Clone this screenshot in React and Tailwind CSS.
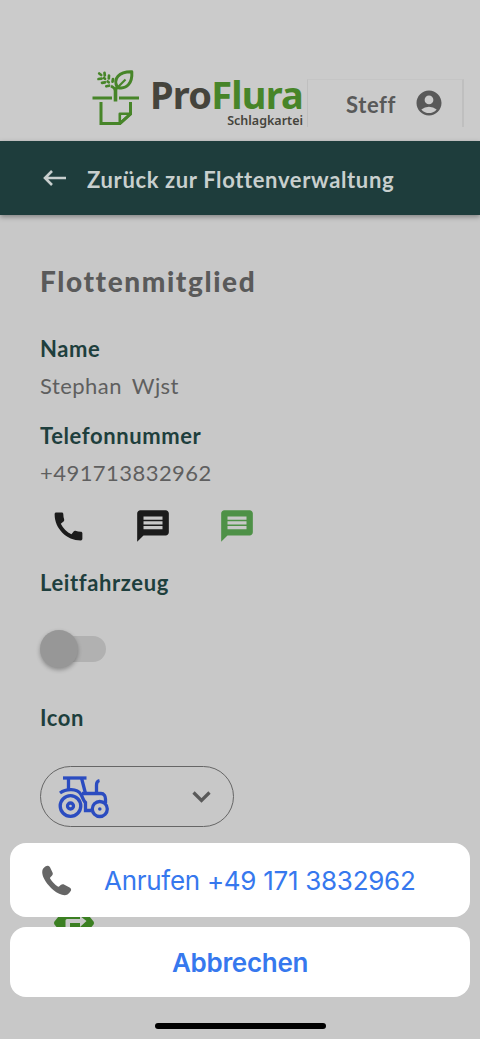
import { useState } from "react";
import clsx from "clsx";
import { MdAccountCircle, MdCall, MdMessage } from "react-icons/md";

function LogoMark() {
  return (
    <svg className="w-[48px] h-[56px] shrink-0" viewBox="0 0 48 56" fill="none" stroke="#478529">
      <path d="M0.5 28H20M27 28h20" strokeWidth="2.8" />
      <path d="M23.500 31.500V19" strokeWidth="3.6" />
      <path d="M23.500 21c0-2-1.500-3.500-4.500-5M23.500 20c.5-1.500 1-2.500 2.500-3.500" strokeWidth="2.8" />
      <path d="M25.500 17.500C20.500 9 27 1.500 39.800 1.800C40.500 12 35.500 20 25.500 17.500Z" strokeWidth="3" strokeLinejoin="round" />
      <path d="M25.500 17.500L33.500 9.500" strokeWidth="2.2" />
      <path
        d="M7.200 3.500l2 1.500M12.500 2.800l.3 2.700M17 5.500l-.2 3M21 9l-.5 2.700M6.500 9l3-.3M10 12.800l3-.5M14.300 16.300l2.800-.6M12 8l1 .8M15.700 11.500l1 .8"
        strokeWidth="2.7"
        strokeLinecap="round"
      />
      <path d="M9 32v21.500h19L38.500 44V32" strokeWidth="3" />
      <path d="M27.800 53.500v-9.700h10.700L27.800 53.500Z" strokeWidth="2.6" strokeLinejoin="round" />
    </svg>
  );
}

function TractorIcon() {
  return (
    <svg className="w-[52px] h-[44px]" viewBox="0 0 52 44" fill="none" stroke="#2b4cc0" strokeWidth="3.3">
      <path d="M5 3h23.500" />
      <path d="M10.500 3v13M23.500 3l4 15.500" />
      <path d="M2 18c6-4.500 17-5 21 1.500 2 3 2.500 7.500 5.500 8.800" />
      <path d="M24 18.500h19c3 0 4.500 2.500 4.500 5.500v4" />
      <path d="M38.500 18.500V10c0-2.500.5-4 3-4.500" />
      <path d="M27.500 27v8.500h6" />
      <circle cx="12.500" cy="31" r="10.3" />
      <circle cx="12.500" cy="31" r="3" />
      <circle cx="41.800" cy="34" r="7.500" />
      <circle cx="41.800" cy="34" r="1.800" fill="#2b4cc0" stroke="none" />
    </svg>
  );
}

function HandsetIcon() {
  return (
    <svg className="w-[30px] h-[31px]" viewBox="0 0 30 31" fill="#666">
      <path d="M1.200 3.500C2.500 1.600 4.500.5 6 .7c.9.1 1.500.6 2 1.500l2.400 5c.7 1.400.5 2.600-.5 3.600l-1.500 1.400c-.5.5-.5 1-.1 1.600 1.800 3 4.600 5.900 7.500 7.700.6.400 1.100.3 1.600-.2l1.300-1.200c1.100-1 2.400-1.100 3.700-.4l5.200 2.800c1.500.9 1.900 2.200 1.100 3.600-.9 1.600-2 2.700-3.200 3.400-3.300 1.900-8.900-.1-14.200-4.500C5.200 19.600.8 13.200.3 8.200.1 6.300.3 4.800 1.200 3.500Z" />
    </svg>
  );
}

function DirectionSign() {
  return (
    <svg className="w-[42px] h-[26px]" viewBox="0 0 42 26">
      <path d="M10 1h22l8.500 10.500q1.200 1.500 0 3L32 25H10L1.500 14.500q-1.200-1.500 0-3Z" fill="#3b7f22" />
      <path d="M12.500 22V10.500q0-1.500 1.500-1.500H27V6l6.500 5L27 17v-4H17v9Z" fill="#c8c8c8" />
    </svg>
  );
}

function Label({ children }) {
  return <h3 className="h-8 text-[22px] leading-8 font-bold tracking-[0.6px] text-[#1e3f3d]">{children}</h3>;
}

function App() {
  const [leader, setLeader] = useState(false);
  const [sheetOpen, setSheetOpen] = useState(true);

  return (
    <div className="relative flex flex-col w-full h-[1039px] overflow-hidden bg-[#c8c8c8] font-['Lato',sans-serif]">
      <header className="flex h-[141px] shrink-0 items-start bg-[#cbcbcb] pl-[92px] pt-[70px]">
        <LogoMark />
        <div className="ml-[10px] w-[153px] font-['Noto_Sans',sans-serif] font-bold whitespace-nowrap">
          <div className="mt-[5px] text-[38px] leading-[38px] tracking-[-0.8px] text-[#45443c]">
            Pro<span className="text-[#478529]">Flura</span>
          </div>
          <div className="text-right text-[12.5px] leading-[15px] font-semibold text-[#45443c]">Schlagkartei</div>
        </div>
        <button className="mt-[9px] ml-[4px] flex h-[48px] w-[157px] items-center border-t border-r-2 border-l border-t-[#c5c5c5] border-r-[#bfbfbf] border-l-[#bfbfbf] pt-px pl-[38px] text-[22px] font-bold tracking-[0.6px] text-[#595959]">
          Steff
          <MdAccountCircle className="mb-[2px] ml-[18px] size-[30px]" />
        </button>
      </header>

      <nav className="flex h-[74px] shrink-0 items-center bg-[#1e3d3c] pt-[3px] pl-[43px] text-[22px] font-bold tracking-[0.63px] text-[#c8cfce] shadow-[0_2px_5px_rgba(0,0,0,0.35)]">
        <svg className="mr-[21px] mb-[3px] h-[16px] w-[23px]" viewBox="0 0 23 16" fill="none" stroke="currentColor" strokeWidth="2.6">
          <path d="M9 1L2 8l7 7M2 8h21" />
        </svg>
        Zurück zur Flottenverwaltung
      </nav>

      <main className="flex flex-col items-start pt-[50px] pl-10 text-[22px] leading-8 text-[#5f5f5f]">
        <h2 className="h-8 text-[28px] font-black tracking-[1.6px] text-[#5a5a5a]">Flottenmitglied</h2>

        <div className="mt-[36px]">
          <Label>Name</Label>
          <p className="mt-[5px] tracking-[0.45px] [word-spacing:-1px] whitespace-pre">Stephan  Wjst</p>
        </div>

        <div className="mt-[18px]">
          <Label>Telefonnummer</Label>
          <p className="mt-[5px] tracking-[0.45px]">+491713832962</p>
        </div>

        <div className="mt-[17px] flex h-10 items-center pl-[10px]">
          <MdCall className="size-[37px] text-[#1b1b1b]" onClick={() => setSheetOpen(true)} />
          <MdMessage className="ml-[46.5px] size-[38px] text-[#1b1b1b]" />
          <MdMessage className="ml-[46px] size-[38px] text-[#4e9147]" />
        </div>

        <div className="mt-[21px]">
          <Label>Leitfahrzeug</Label>
          <button
            className={clsx(
              "mt-[37px] ml-[8px] flex h-[26px] w-[58px] items-center rounded-full",
              leader ? "justify-end bg-[#8fae84]" : "bg-[#b1b1b1]"
            )}
            onClick={() => setLeader(!leader)}
          >
            <span className="-ml-[8px] size-[38px] rounded-full bg-[#979797] shadow-[0_2px_4px_rgba(0,0,0,0.3)]" />
          </button>
        </div>

        <div className="mt-[40px]">
          <Label>Icon</Label>
          <button className="mt-[32px] flex h-[61px] w-[194px] items-center justify-between rounded-full border border-[#666] pr-[22px] pl-[17px]">
            <TractorIcon />
            <svg className="h-[14px] w-[19px]" viewBox="0 0 19 14" fill="none" stroke="#595959" strokeWidth="3.2">
              <path d="M1.500 2.500l8 8 8-8" />
            </svg>
          </button>
        </div>

        <div className="mt-[83px] ml-[13px]">
          <DirectionSign />
        </div>
      </main>

      {sheetOpen && (
        <div className="absolute inset-x-[10px] bottom-[42px] flex flex-col gap-[10px] font-['Inter',sans-serif] text-[26px] text-[#3678ee]">
          <button className="flex h-[74px] items-center rounded-[16px] bg-white pl-[32px]">
            <HandsetIcon />
            <span className="ml-[32px] tracking-[-0.28px] whitespace-nowrap">Anrufen +49 171 3832962</span>
          </button>
          <button
            className="h-[70px] rounded-[16px] bg-white font-semibold tracking-[-0.3px]"
            onClick={() => setSheetOpen(false)}
          >
            Abbrechen
          </button>
        </div>
      )}

      <div className="absolute bottom-[10px] left-[155px] h-[6px] w-[171px] rounded-full bg-black" />
    </div>
  );
}

export default App;
